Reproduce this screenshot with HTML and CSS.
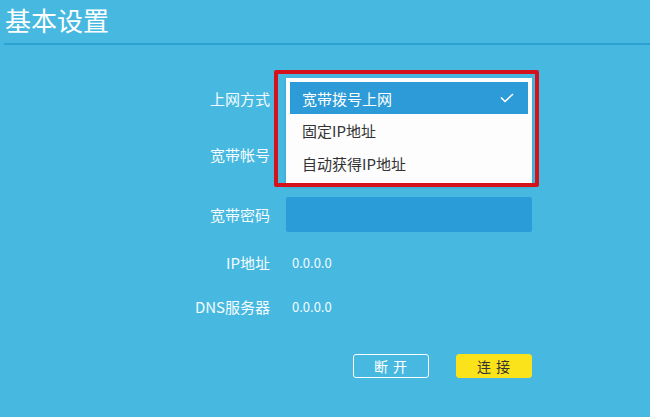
FILE: index.html
```html
<!DOCTYPE html>
<html lang="zh-CN">
<head>
<meta charset="utf-8">
<title>基本设置</title>
<link rel="stylesheet" href="styles.css">
</head>
<body>
<div class="page">
  <header class="header">
    <h1 class="title">基本设置</h1>
  </header>
  <form class="form">
    <div class="label">上网方式</div>
    <div class="field select-field">
      <div class="dropdown">
        <div class="option selected">
          <span>宽带拨号上网</span>
          <svg class="check" width="14" height="10" viewBox="0 0 14 10"><polyline points="1,4.5 5,8.5 13,1" fill="none" stroke="#ffffff" stroke-width="1.6"/></svg>
        </div>
        <div class="option">固定IP地址</div>
        <div class="option">自动获得IP地址</div>
      </div>
      <div class="highlight"></div>
    </div>

    <div class="label">宽带帐号</div>
    <div class="field"><div class="input"></div></div>

    <div class="label">宽带密码</div>
    <div class="field"><div class="input"></div></div>

    <div class="label">IP地址</div>
    <div class="field"><span class="value">0.0.0.0</span></div>

    <div class="label">DNS服务器</div>
    <div class="field"><span class="value">0.0.0.0</span></div>

    <div class="actions">
      <button type="button" class="btn btn-outline">断 开</button>
      <button type="button" class="btn btn-primary">连 接</button>
    </div>
  </form>
</div>
</body>
</html>
```

FILE: styles.css
```css
* { box-sizing: border-box; }

html, body {
  margin: 0;
  padding: 0;
}

body {
  width: 650px;
  height: 417px;
  overflow: hidden;
  background: #47b9e0;
  font-family: "Noto Sans CJK SC", "Noto Sans", sans-serif;
  color: #ffffff;
}

.page {
  width: 650px;
  height: 417px;
}

.header {
  margin-left: 4px;
  height: 45px;
  border-bottom: 2px solid #2ca2d2;
}

.title {
  margin: 0;
  padding-left: 1px;
  font-size: 26px;
  font-weight: 400;
  line-height: 39px;
  color: #ffffff;
}

.form {
  display: grid;
  grid-template-columns: 270px 246px;
  grid-template-rows: 40px 72px 49px 46px 42px;
  column-gap: 16px;
  margin-top: 33px;
}

.label {
  display: flex;
  align-items: center;
  justify-content: flex-end;
  font-size: 15px;
  color: #f4fbfe;
}

.field {
  display: flex;
  align-items: center;
}

.select-field {
  position: relative;
  z-index: 2;
}

.dropdown {
  position: absolute;
  left: 0;
  top: 0;
  width: 246px;
  height: 108px;
  padding: 4px 4px 0;
  background: #fdfdfd;
  box-shadow: 0 1px 3px rgba(0, 0, 0, 0.15);
}

.option {
  display: flex;
  align-items: center;
  justify-content: space-between;
  height: 33px;
  padding: 0 14px 0 12px;
  font-size: 15px;
  color: #333333;
}

.option.selected {
  height: 32px;
  background: #2c9bd8;
  color: #ffffff;
}

.check {
  display: block;
}

.highlight {
  position: absolute;
  left: -12px;
  top: -8px;
  width: 265px;
  height: 117px;
  border: 4px solid #d5121c;
  border-radius: 2px;
}

.input {
  width: 246px;
  height: 35px;
  border-radius: 2px;
  background: #2a9dd8;
}

.value {
  padding-left: 6px;
  font-size: 13px;
  color: #f4fbfe;
}

.actions {
  grid-column: 2;
  display: flex;
  justify-content: flex-end;
  gap: 27px;
  margin-top: 27px;
}

.btn {
  width: 76px;
  height: 24px;
  border-radius: 3px;
  font-family: "Noto Sans CJK SC", "Noto Sans", sans-serif;
  font-size: 14px;
  letter-spacing: 1px;
  padding: 0;
  cursor: pointer;
}

.btn-outline {
  background: transparent;
  border: 1px solid #ffffff;
  color: #ffffff;
}

.btn-primary {
  background: #fbe31c;
  border: 1px solid #fbe31c;
  color: #333333;
}
```
